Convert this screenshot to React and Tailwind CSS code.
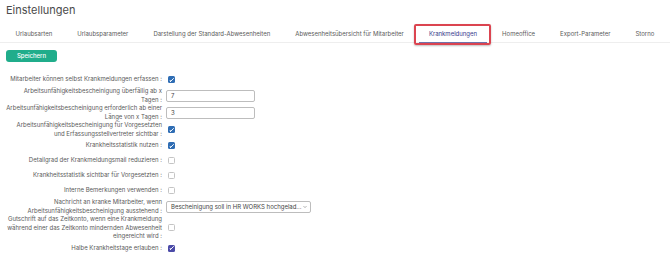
import React from "react";

const tabs = [
    "Urlaubsarten",
    "Urlaubsparameter",
    "Darstellung der Standard-Abwesenheiten",
    "Abwesenheitsübersicht für Mitarbeiter",
    "Krankmeldungen",
    "Homeoffice",
    "Export-Parameter",
    "Storno",
];

const rows = [
    { label: ["Mitarbeiter können selbst Krankmeldungen erfassen :"], type: "check", checked: true },
    { label: ["Arbeitsunfähigkeitsbescheinigung überfällig ab x", "Tagen :"], type: "input", value: "7" },
    { label: ["Arbeitsunfähigkeitsbescheinigung erforderlich ab einer", "Länge von x Tagen :"], type: "input", value: "3" },
    { label: ["Arbeitsunfähigkeitsbescheinigung für Vorgesetzten", "und Erfassungsstellvertreter sichtbar :"], type: "check", checked: true },
    { label: ["Krankheitsstatistik nutzen :"], type: "check", checked: true },
    { label: ["Detailgrad der Krankmeldungsmail reduzieren :"], type: "check" },
    { label: ["Krankheitsstatistik sichtbar für Vorgesetzten :"], type: "check" },
    { label: ["Interne Bemerkungen verwenden :"], type: "check" },
    { label: ["Nachricht an kranke Mitarbeiter, wenn", "Arbeitsunfähigkeitsbescheinigung ausstehend :"], type: "select" },
    {
        label: [
            "Gutschrift auf das Zeitkonto, wenn eine Krankmeldung",
            "während einer das Zeitkonto mindernden Abwesenheit",
            "eingereicht wird :",
        ],
        type: "check",
    },
    { label: ["Halbe Krankheitstage erlauben :"], type: "check", checked: true, focus: true },
];

function Check({ checked, focus }) {
    if (!checked) {
        return <span className="ml-[2px] block h-[7px] w-[7px] rounded-[1.5px] border border-[#c4c4c4] bg-white" />;
    }
    return (
        <span
            className={`ml-[2px] flex h-[7px] w-[7px] items-center justify-center rounded-[1.5px] ${
                focus ? "bg-[#4c4ba8]" : "bg-[#2f6db4]"
            }`}
        >
            <svg viewBox="0 0 10 10" className="h-[6px] w-[6px]">
                <path d="M2.5 7.5 L7.5 2.5" stroke="white" strokeWidth="1.6" fill="none" strokeLinecap="round" />
                <path d="M2.5 7.5 L2 5.8" stroke="white" strokeWidth="1.6" fill="none" strokeLinecap="round" />
            </svg>
        </span>
    );
}

function Control({ row }) {
    if (row.type === "check") return <Check checked={row.checked} focus={row.focus} />;
    if (row.type === "input") {
        return (
            <div className="flex h-[12px] w-[89px] items-center rounded-[2px] border border-[#bdbdbd] bg-white pl-[4px] text-[6px] leading-[8px] text-[#444]">
                {row.value}
            </div>
        );
    }
    return (
        <div className="flex h-[12px] w-[145px] items-center justify-between whitespace-nowrap rounded-[2px] border border-[#bdbdbd] bg-white pl-[4px] pr-[4px] text-[6px] leading-[8px] text-[#444]">
            <span>Bescheinigung soll in HR WORKS hochgelad...</span>
            <svg viewBox="0 0 10 10" className="h-[6px] w-[6px] shrink-0">
                <path d="M2.5 3.5 L5 6 L7.5 3.5" stroke="#777" strokeWidth="1" fill="none" />
            </svg>
        </div>
    );
}

export default function App() {
    return (
        <div className="h-[274px] w-[670px] overflow-hidden bg-white text-[#5a5a5a]" style={{ fontFamily: "Inter, 'Noto Sans', sans-serif" }}>
            <h1 className="px-[6px] pt-[3px] text-[11px] leading-[14px] text-[#4a4a4a]">Einstellungen</h1>

            {/* Tabs */}
            <div className="mt-[8px] flex border-b border-[#eeeeee] pl-[3px]">
                {tabs.map((t) => {
                    const active = t === "Krankmeldungen";
                    return (
                        <div
                            key={t}
                            className={`relative whitespace-nowrap px-[12.5px] pb-[4px] pt-[4px] text-[6px] leading-[9px] ${
                                active ? "text-[#363a8c]" : "text-[#5a5a5a]"
                            }`}
                        >
                            {t}
                            {active && (
                                <>
                                    <span className="absolute bottom-[-1px] left-[3px] right-[3px] h-[1px] bg-[#6f72aa]" />
                                    <span className="absolute bottom-[-3px] left-[-2px] right-[-1px] top-[-1px] rounded-[2px] border-2 border-[#db4450] shadow-[0_1px_2px_rgba(0,0,0,0.25)]" />
                                </>
                            )}
                        </div>
                    );
                })}
            </div>

            <div className="px-[6px] pt-[7px]">
                <button className="block h-[12px] w-[51px] rounded-[3px] bg-[#20ad8b] text-[6px] font-medium leading-[12px] text-white">
                    Speichern
                </button>
            </div>

            {/* Form */}
            <div className="mt-[10px] flex flex-col pl-[6px]">
                {rows.map((r, i) => (
                    <div key={i} className="flex min-h-[15px] items-center">
                        <div className="w-[156px] whitespace-nowrap text-right text-[6px] leading-[8.5px] text-[#5a5a5a]">
                            {r.label.map((l, j) => (
                                <div key={j}>{l}</div>
                            ))}
                        </div>
                        <div className="pl-[4px]">
                            <Control row={r} />
                        </div>
                    </div>
                ))}
            </div>
        </div>
    );
}
